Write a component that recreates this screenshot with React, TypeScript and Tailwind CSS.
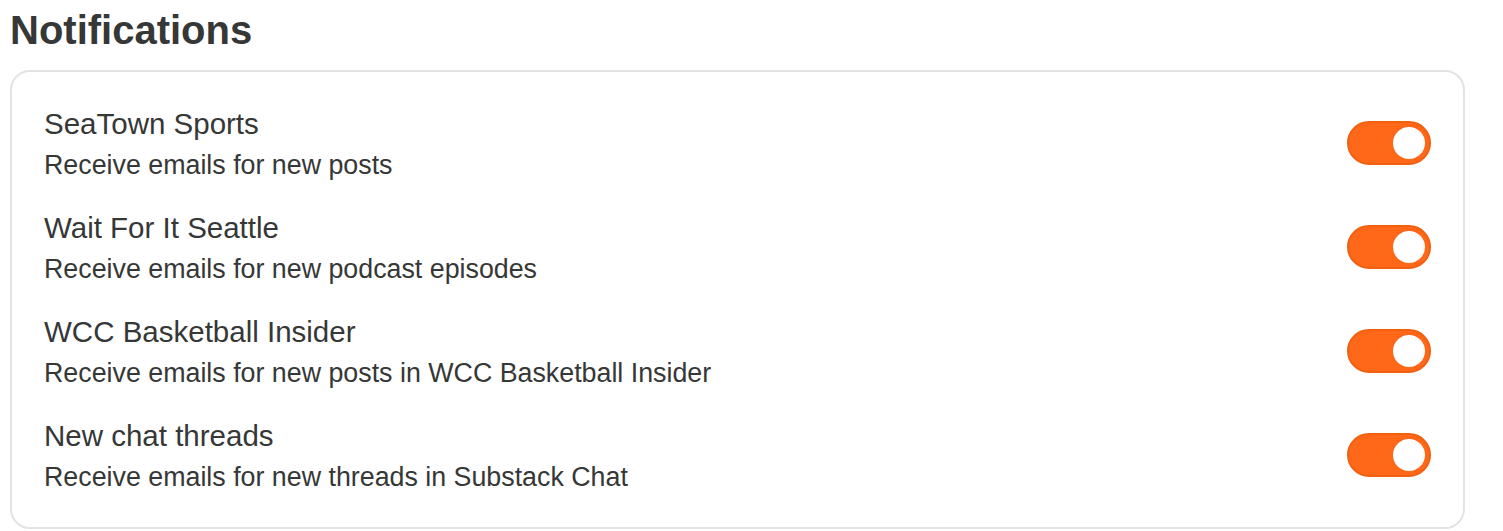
import { useState } from "react";

const items = [
  { id: "seatown", title: "SeaTown Sports", desc: "Receive emails for new posts" },
  { id: "waitforit", title: "Wait For It Seattle", desc: "Receive emails for new podcast episodes" },
  { id: "wcc", title: "WCC Basketball Insider", desc: "Receive emails for new posts in WCC Basketball Insider" },
  { id: "chat", title: "New chat threads", desc: "Receive emails for new threads in Substack Chat" },
];

function Toggle({ on, onChange }: { on: boolean; onChange: () => void }) {
  return (
    <button
      onClick={onChange}
      className={`relative h-[44px] w-[84px] shrink-0 rounded-full border-2 ${
        on ? "border-[#f0600f] bg-[#ff6719]" : "border-[#d9d9d9] bg-[#e5e5e5]"
      }`}
    >
      <span
        className={`absolute top-[4px] h-[32px] w-[32px] rounded-full bg-white ${on ? "right-[4px]" : "left-[4px]"}`}
      />
    </button>
  );
}

export default function App() {
  const [state, setState] = useState<Record<string, boolean>>({
    seatown: true,
    waitforit: true,
    wcc: true,
    chat: true,
  });

  return (
    <div className="min-h-screen bg-white pl-[10px] pr-[38px] pt-[6px] font-['Liberation_Sans',Arial,sans-serif] text-[#363737]">
      <h1 className="text-[40px] font-bold leading-[48px]">Notifications</h1>
      <div className="mt-[16px] rounded-[20px] border-2 border-[#e3e3e3] px-[32px] pt-[19px] pb-[20px]">
        {items.map((it) => (
          <div key={it.id} className="flex h-[104px] items-center justify-between">
            <div className="flex translate-y-[1px] flex-col">
              <span className="text-[29.5px] leading-[36px]">{it.title}</span>
              <span className="mt-[6px] text-[26.8px] leading-[34px]">{it.desc}</span>
            </div>
            <Toggle on={state[it.id]} onChange={() => setState((s) => ({ ...s, [it.id]: !s[it.id] }))} />
          </div>
        ))}
      </div>
    </div>
  );
}
